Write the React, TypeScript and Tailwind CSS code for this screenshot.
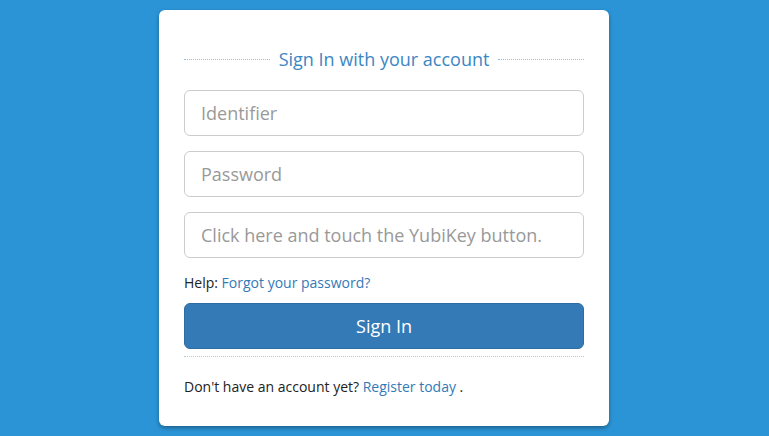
import React from "react";

const fields = ["Identifier", "Password", "Click here and touch the YubiKey button."];

export default function App() {
  return (
    <div className="min-h-[436px] w-full bg-[#2b94d6] pt-[10px] font-['Open_Sans',sans-serif]">
      <div className="ml-[159px] w-[450px] rounded-md bg-white px-[25px] pt-[36px] pb-[29px] shadow-[0_2px_4px_rgba(0,0,0,0.35)]">
        {/* Heading with dotted rules */}
        <div className="mb-[18px] flex items-center gap-[9px]">
          <div className="flex-1 border-t border-dotted border-[#8fbfe0]" />
          <h2 className="text-[18px] leading-[26px] text-[#3a87c4]">Sign In with your account</h2>
          <div className="flex-1 border-t border-dotted border-[#8fbfe0]" />
        </div>

        {fields.map((f, i) => (
          <input
            key={i}
            type={f === "Password" ? "password" : "text"}
            placeholder={f}
            className="mb-[15px] block h-[46px] w-full rounded-md border border-[#cccccc] px-4 text-[18px] text-[#555] outline-none placeholder:text-[#999]"
          />
        ))}

        <p className="text-[14px] leading-[20px] text-[#222]">
          Help: <a className="text-[#337ab7]">Forgot your password?</a>
        </p>

        <button className="mt-[10px] block h-[46px] w-full rounded-md border border-[#2e6da4] bg-[#337ab7] text-[18px] text-white">
          Sign In
        </button>

        <div className="mt-[7px] border-t border-dotted border-[#a9cfe8]" />

        <p className="mt-[20px] text-[14px] leading-[20px] text-[#222]">
          Don't have an account yet? <a className="text-[#337ab7]">Register today</a> .
        </p>
      </div>
    </div>
  );
}
